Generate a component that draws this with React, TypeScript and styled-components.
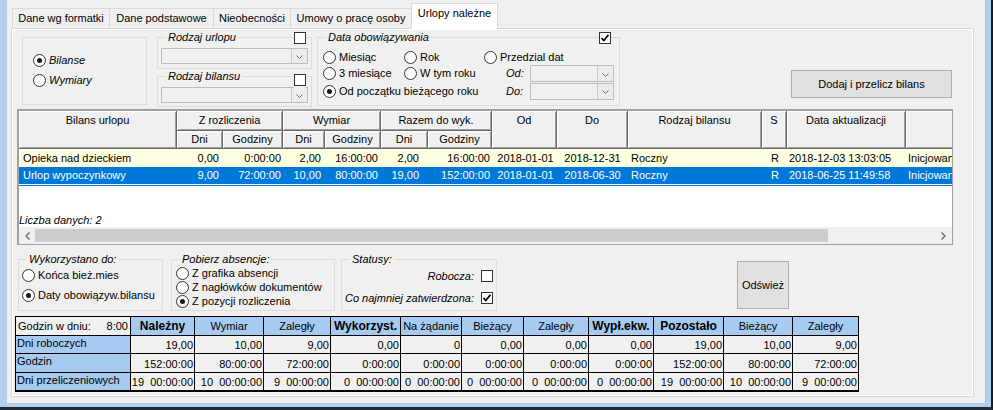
import React from "react";
import styled, { createGlobalStyle } from "styled-components";

const GlobalStyle = createGlobalStyle`
  html, body { margin: 0; padding: 0; background: #f0f0f0; }
  body { font-family: "Liberation Sans", Arial, sans-serif; font-size: 11px; line-height: 13px; color: #000; }
  * { box-sizing: border-box; }
`;

const Window = styled.div`
  width: 993px;
  height: 410px;
  border-right: 2px solid #1c1c1c;
  border-bottom: 3px solid #1d2b36;
  overflow: hidden;
`;

const Frame = styled.div`
  height: 100%;
  border-left: 7px solid #b4cfed;
  border-right: 6px solid #b4cfed;
  border-bottom: 4px solid #b4cfed;
  background: #f0f0f0;
  padding-left: 4px;
`;

const TabStrip = styled.div`
  height: 28px;
  display: flex;
  align-items: flex-end;
  padding-left: 1px;
`;

const Tab = styled.div<{ $w: number; $active?: boolean }>`
  width: ${(p) => p.$w}px;
  height: ${(p) => (p.$active ? 26 : 20)}px;
  margin-right: -1px;
  margin-bottom: ${(p) => (p.$active ? -1 : 0)}px;
  position: relative;
  z-index: ${(p) => (p.$active ? 2 : 1)};
  border: 1px solid #d9d9d9;
  border-bottom: none;
  background: ${(p) => (p.$active ? "#ffffff" : "#f0f0f0")};
  display: flex;
  justify-content: center;
  align-items: center;
  padding-bottom: ${(p) => (p.$active ? 6 : 1)}px;
  white-space: nowrap;
`;

const Panel = styled.div`
  width: 963px;
  height: 369px;
  border: 1px solid #d9d9d9;
  box-shadow: inset 1px 1px 0 #fff, inset -1px -1px 0 #fff;
  display: flex;
  flex-direction: column;
`;

const TopRow = styled.div`
  height: 78px;
  display: flex;
  align-items: flex-start;
`;

const ModeBox = styled.div`
  margin: 8px 0 0 10px;
  width: 125px;
  height: 68px;
  border: 1px solid #dcdcdc;
  padding: 16px 0 0 10px;
  display: flex;
  flex-direction: column;
  gap: 7px;
`;

const ComboColumn = styled.div`
  margin-left: 10px;
  width: 155px;
  display: flex;
  flex-direction: column;
`;

const GroupWrap = styled.div<{ $mt: number; $ml?: number; $w?: number }>`
  position: relative;
  margin-top: ${(p) => p.$mt}px;
  margin-left: ${(p) => p.$ml ?? 0}px;
  width: ${(p) => (p.$w ? `${p.$w}px` : "auto")};
`;

const Fieldset = styled.fieldset<{ $h: number }>`
  margin: 0;
  padding: 0;
  min-width: 0;
  height: ${(p) => p.$h}px;
  border: 1px solid #dcdcdc;
`;

const Legend = styled.legend`
  margin-left: 8px;
  padding: 0 2px;
  font-style: italic;
  line-height: 13px;
  font-size: 11px;
`;

const CornerCheck = styled.div<{ $top: number; $right: number }>`
  position: absolute;
  top: ${(p) => p.$top}px;
  right: ${(p) => p.$right}px;
  background: #f0f0f0;
`;

const ComboBody = styled.div`
  padding: 4px 3px 0 3px;
`;

const ComboBox = styled.div<{ $w?: number; $h?: number }>`
  width: ${(p) => (p.$w ? `${p.$w}px` : "100%")};
  height: ${(p) => p.$h ?? 16}px;
  border: 1px solid #bcbcbc;
  background: #f0f0f0;
  display: flex;
  justify-content: flex-end;
`;

const ComboButton = styled.div`
  width: 16px;
  height: 100%;
  border-left: 1px solid #c8c8c8;
  background: #ececec;
  display: flex;
  align-items: center;
  justify-content: center;
  padding-top: 2px;
`;

const DateBody = styled.div`
  padding: 5px 0 0 5px;
  display: grid;
  grid-template-columns: 81px 80px 1fr;
  grid-template-rows: 16px 17px 18px;
  align-items: center;
`;

const FieldRow = styled.div`
  display: flex;
  align-items: center;
  padding-left: 22px;
`;

const FieldLabel = styled.span`
  width: 24px;
  font-style: italic;
`;

const ActionButton = styled.div<{ $ml: number; $mt: number; $w: number; $h: number }>`
  margin-left: ${(p) => p.$ml}px;
  margin-top: ${(p) => p.$mt}px;
  width: ${(p) => p.$w}px;
  height: ${(p) => p.$h}px;
  background: #e1e1e1;
  border: 1px solid #adadad;
  display: flex;
  align-items: center;
  justify-content: center;
  white-space: nowrap;
`;

const RadioOption = styled.label<{ $italic?: boolean }>`
  display: flex;
  align-items: center;
  gap: 3px;
  height: 13px;
  white-space: nowrap;
  font-style: ${(p) => (p.$italic ? "italic" : "normal")};
`;

const RadioCircle = styled.span<{ $on?: boolean }>`
  flex: none;
  width: 13px;
  height: 13px;
  border-radius: 50%;
  border: 1px solid #333;
  background: #fff;
  display: inline-flex;
  align-items: center;
  justify-content: center;
  &::after {
    content: "";
    width: 5px;
    height: 5px;
    border-radius: 50%;
    background: ${(p) => (p.$on ? "#1a1a1a" : "transparent")};
  }
`;

const CheckBox = styled.span`
  flex: none;
  width: 12px;
  height: 12px;
  border: 1px solid #333;
  background: #fff;
  display: inline-flex;
  align-items: center;
  justify-content: center;
`;

/* ---------- Grid ---------- */

const COLS = "158px 46px 60px 42px 56px 47px 64px 65px 71px 134px 25px 119px 110px";

const GridFrame = styled.div`
  margin: 2px 0 0 5px;
  width: 936px;
  height: 136px;
  border: 1px solid #a0a0a0;
  border-top-width: 2px;
  border-left-width: 2px;
  background: #fff;
  display: flex;
  flex-direction: column;
  overflow: hidden;
`;

const GridHeader = styled.div`
  display: grid;
  grid-template-columns: ${COLS};
  grid-template-rows: 20px 18px;
  flex: none;
`;

const HeadCell = styled.div<{ $col: string; $row: string; $top?: boolean }>`
  grid-column: ${(p) => p.$col};
  grid-row: ${(p) => p.$row};
  background: #f0f0f0;
  border-right: 1px solid #696969;
  border-bottom: 1px solid #696969;
  box-shadow: inset 1px 1px 0 #fff, inset -1px -1px 0 #a0a0a0;
  display: flex;
  justify-content: center;
  align-items: ${(p) => (p.$top ? "flex-start" : "center")};
  padding-top: ${(p) => (p.$top ? 3 : 0)}px;
  white-space: nowrap;
`;

const RowsArea = styled.div`
  flex: 1;
  display: flex;
  flex-direction: column;
  padding-top: 1px;
`;

const DataRow = styled.div<{ $selected?: boolean }>`
  display: grid;
  grid-template-columns: ${COLS};
  height: 17px;
  background: ${(p) => (p.$selected ? "#0078d7" : "#ffffe1")};
  color: ${(p) => (p.$selected ? "#fff" : "#000")};
  box-shadow: ${(p) => (p.$selected ? "0 1px 0 #fff, 0 2px 0 #0078d7" : "none")};
`;

const DataCell = styled.div<{ $align?: string; $pl?: number; $pr?: number }>`
  display: flex;
  align-items: center;
  justify-content: ${(p) => p.$align ?? "flex-start"};
  padding-left: ${(p) => p.$pl ?? 0}px;
  padding-right: ${(p) => p.$pr ?? 0}px;
  white-space: nowrap;
  overflow: hidden;
`;

const CountLabel = styled.div`
  margin-top: auto;
  height: 13px;
  font-style: italic;
`;

const ScrollBar = styled.div`
  flex: none;
  height: 17px;
  background: #f0f0f0;
  display: flex;
  align-items: center;
`;

const ScrollArrow = styled.div<{ $w: number }>`
  width: ${(p) => p.$w}px;
  height: 100%;
  display: flex;
  align-items: center;
  justify-content: center;
`;

const ScrollThumb = styled.div`
  width: 793px;
  height: 13px;
  background: #cdcdcd;
`;

const ScrollTrack = styled.div`
  flex: 1;
`;

/* ---------- Bottom ---------- */

const BottomRow = styled.div`
  height: 58px;
  margin-top: 8px;
  display: flex;
  align-items: flex-start;
`;

const OptionList = styled.div<{ $pt: number; $pl: number; $gap: number; $rowH: number }>`
  padding: ${(p) => p.$pt}px 0 0 ${(p) => p.$pl}px;
  display: flex;
  flex-direction: column;
  gap: ${(p) => p.$gap}px;
  & > * { height: ${(p) => p.$rowH}px; }
`;

const StatusList = styled.div`
  padding: 3px 3px 0 0;
  display: flex;
  flex-direction: column;
  gap: 8px;
`;

const StatusRow = styled.div`
  height: 14px;
  display: flex;
  align-items: center;
  justify-content: flex-end;
  gap: 7px;
  font-style: italic;
  white-space: nowrap;
`;

const SUM_COLS = "115px 64px 69px 67px 70px 61px 62px 65px 65px 70px 69px 66px";

const SummaryTable = styled.div`
  margin: 5px 0 0 3px;
  width: 844px;
  display: grid;
  grid-template-columns: ${SUM_COLS};
  grid-template-rows: 19px 18px 19px 18px;
  border-left: 1px solid #000;
  border-top: 1px solid #000;
  border-right: 1px solid #000;
  border-bottom: 1px solid #000;
`;

const SumCell = styled.div<{ $kind: "corner" | "head" | "label" | "value"; $bold?: boolean }>`
  border-right: 1px solid #000;
  border-bottom: 1px solid #000;
  background: ${(p) => (p.$kind === "head" || p.$kind === "label" ? "#a6caf0" : "#f0f0f0")};
  font-weight: ${(p) => (p.$bold ? 700 : 400)};
  font-size: ${(p) => (p.$bold ? "12px" : "11px")};
  display: flex;
  white-space: pre;
  overflow: hidden;
  justify-content: ${(p) =>
    p.$kind === "head" ? "center" : p.$kind === "value" ? "flex-end" : p.$kind === "corner" ? "space-between" : "flex-start"};
  align-items: ${(p) => (p.$kind === "label" ? "flex-start" : p.$kind === "value" ? "flex-end" : "center")};
  padding: ${(p) =>
    p.$kind === "label" ? "1px 0 0 1px" : p.$kind === "value" ? "0 1px 1px 0" : p.$kind === "corner" ? "0 2px 0 2px" : "0"};
`;

/* ---------- small drawings ---------- */

const Chevron = () => (
  <svg width="7" height="4" viewBox="0 0 7 4">
    <polyline points="0.5,0.5 3.5,3.5 6.5,0.5" fill="none" stroke="#707070" strokeWidth="1" />
  </svg>
);

const Tick = () => (
  <svg width="10" height="10" viewBox="0 0 10 10">
    <polyline points="1.5,5 3.8,7.5 8.5,1.8" fill="none" stroke="#000" strokeWidth="1.8" />
  </svg>
);

const ArrowGlyph = ({ dir }: { dir: "l" | "r" }) => (
  <svg width="5" height="8" viewBox="0 0 5 8">
    <polyline
      points={dir === "l" ? "4.5,0.5 1,4 4.5,7.5" : "0.5,0.5 4,4 0.5,7.5"}
      fill="none"
      stroke="#606060"
      strokeWidth="1.2"
    />
  </svg>
);

const Radio = ({ on, label, italic }: { on?: boolean; label: string; italic?: boolean }) => (
  <RadioOption $italic={italic}>
    <RadioCircle $on={on} />
    {label}
  </RadioOption>
);

const Check = ({ on }: { on?: boolean }) => <CheckBox>{on ? <Tick /> : null}</CheckBox>;

const Combo = ({ w, h }: { w?: number; h?: number }) => (
  <ComboBox $w={w} $h={h}>
    <ComboButton>
      <Chevron />
    </ComboButton>
  </ComboBox>
);

/* ---------- data ---------- */

const tabs = [
  { t: "Dane wg formatki", w: 98 },
  { t: "Dane podstawowe", w: 105 },
  { t: "Nieobecności", w: 78 },
  { t: "Umowy o pracę osoby", w: 122 },
  { t: "Urlopy należne", w: 87, active: true },
];

type Row = string[];
const rows: { cells: Row; selected?: boolean }[] = [
  {
    cells: ["Opieka nad dzieckiem", "0,00", "0:00:00", "2,00", "16:00:00", "2,00", "16:00:00", "2018-01-01", "2018-12-31", "Roczny", "R", "2018-12-03 13:03:05", "Inicjowany"],
  },
  {
    cells: ["Urlop wypoczynkowy", "9,00", "72:00:00", "10,00", "80:00:00", "19,00", "152:00:00", "2018-01-01", "2018-06-30", "Roczny", "R", "2018-06-25 11:49:58", "Inicjowany"],
    selected: true,
  },
];

const cellFmt: { align: string; pl?: number; pr?: number }[] = [
  { align: "flex-start", pl: 4 },
  { align: "flex-end", pr: 4 },
  { align: "flex-end", pr: 2 },
  { align: "flex-end", pr: 4 },
  { align: "flex-end", pr: 3 },
  { align: "flex-end", pr: 9 },
  { align: "flex-end", pr: 2 },
  { align: "center", pl: 2 },
  { align: "center" },
  { align: "flex-start", pl: 3 },
  { align: "center", pl: 1 },
  { align: "flex-start", pl: 2 },
  { align: "flex-start", pl: 2 },
];

const sumHead = [
  { t: "Należny", b: true },
  { t: "Wymiar" },
  { t: "Zaległy" },
  { t: "Wykorzyst.", b: true },
  { t: "Na żądanie" },
  { t: "Bieżący" },
  { t: "Zaległy" },
  { t: "Wypł.ekw.", b: true },
  { t: "Pozostało", b: true },
  { t: "Bieżący" },
  { t: "Zaległy" },
];

const sumRows: { label: string; values: string[] }[] = [
  { label: "Dni roboczych", values: ["19,00", "10,00", "9,00", "0,00", "0", "0,00", "0,00", "0,00", "19,00", "10,00", "9,00"] },
  {
    label: "Godzin",
    values: ["152:00:00", "80:00:00", "72:00:00", "0:00:00", "0:00:00", "0:00:00", "0:00:00", "0:00:00", "152:00:00", "80:00:00", "72:00:00"],
  },
  {
    label: "Dni przeliczeniowych",
    values: [
      "19  00:00:00",
      "10  00:00:00",
      "9  00:00:00",
      "0  00:00:00",
      "0  00:00:00",
      "0  00:00:00",
      "0  00:00:00",
      "0  00:00:00",
      "19  00:00:00",
      "10  00:00:00",
      "9  00:00:00",
    ],
  },
];

export default function App() {
  return (
    <>
      <GlobalStyle />
      <Window>
        <Frame>
          <TabStrip>
            {tabs.map((t) => (
              <Tab key={t.t} $w={t.w} $active={t.active}>
                {t.t}
              </Tab>
            ))}
          </TabStrip>
          <Panel>
            <TopRow>
              <ModeBox>
                <Radio on label="Bilanse" italic />
                <Radio label="Wymiary" italic />
              </ModeBox>
              <ComboColumn>
                <GroupWrap $mt={2}>
                  <Fieldset $h={38}>
                    <Legend>Rodzaj urlopu</Legend>
                    <ComboBody>
                      <Combo />
                    </ComboBody>
                  </Fieldset>
                  <CornerCheck $top={1} $right={6}>
                    <Check />
                  </CornerCheck>
                </GroupWrap>
                <GroupWrap $mt={1}>
                  <Fieldset $h={37}>
                    <Legend>Rodzaj bilansu</Legend>
                    <ComboBody>
                      <Combo />
                    </ComboBody>
                  </Fieldset>
                  <CornerCheck $top={4} $right={6}>
                    <Check />
                  </CornerCheck>
                </GroupWrap>
              </ComboColumn>
              <GroupWrap $mt={2} $ml={5} $w={303}>
                <Fieldset $h={75}>
                  <Legend>Data obowiązywania</Legend>
                  <DateBody>
                    <Radio label="Miesiąc" />
                    <Radio label="Rok" />
                    <Radio label="Przedzial dat" />
                    <Radio label="3 miesiące" />
                    <Radio label="W tym roku" />
                    <FieldRow>
                      <FieldLabel>Od:</FieldLabel>
                      <Combo w={84} h={17} />
                    </FieldRow>
                    <div style={{ gridColumn: "1 / span 2" }}>
                      <Radio on label="Od początku bieżącego roku" />
                    </div>
                    <FieldRow>
                      <FieldLabel>Do:</FieldLabel>
                      <Combo w={84} h={17} />
                    </FieldRow>
                  </DateBody>
                </Fieldset>
                <CornerCheck $top={1} $right={9}>
                  <Check on />
                </CornerCheck>
              </GroupWrap>
              <ActionButton $ml={171} $mt={41} $w={161} $h={28}>
                Dodaj i przelicz bilans
              </ActionButton>
            </TopRow>

            <GridFrame>
              <GridHeader>
                <HeadCell $col="1" $row="1 / span 2" $top>Bilans urlopu</HeadCell>
                <HeadCell $col="2 / span 2" $row="1">Z rozliczenia</HeadCell>
                <HeadCell $col="4 / span 2" $row="1">Wymiar</HeadCell>
                <HeadCell $col="6 / span 2" $row="1">Razem do wyk.</HeadCell>
                <HeadCell $col="8" $row="1 / span 2" $top>Od</HeadCell>
                <HeadCell $col="9" $row="1 / span 2" $top>Do</HeadCell>
                <HeadCell $col="10" $row="1 / span 2" $top>Rodzaj bilansu</HeadCell>
                <HeadCell $col="11" $row="1 / span 2" $top>S</HeadCell>
                <HeadCell $col="12" $row="1 / span 2" $top>Data aktualizacji</HeadCell>
                <HeadCell $col="13" $row="1 / span 2" $top></HeadCell>
                <HeadCell $col="2" $row="2">Dni</HeadCell>
                <HeadCell $col="3" $row="2">Godziny</HeadCell>
                <HeadCell $col="4" $row="2">Dni</HeadCell>
                <HeadCell $col="5" $row="2">Godziny</HeadCell>
                <HeadCell $col="6" $row="2">Dni</HeadCell>
                <HeadCell $col="7" $row="2">Godziny</HeadCell>
              </GridHeader>
              <RowsArea>
                {rows.map((r, i) => (
                  <DataRow key={i} $selected={r.selected}>
                    {r.cells.map((c, j) => (
                      <DataCell key={j} $align={cellFmt[j].align} $pl={cellFmt[j].pl} $pr={cellFmt[j].pr}>
                        {c}
                      </DataCell>
                    ))}
                  </DataRow>
                ))}
                <CountLabel>Liczba danych: 2</CountLabel>
              </RowsArea>
              <ScrollBar>
                <ScrollArrow $w={16}>
                  <ArrowGlyph dir="l" />
                </ScrollArrow>
                <ScrollThumb />
                <ScrollTrack />
                <ScrollArrow $w={17}>
                  <ArrowGlyph dir="r" />
                </ScrollArrow>
              </ScrollBar>
            </GridFrame>

            <BottomRow>
              <GroupWrap $mt={0} $ml={6} $w={145}>
                <Fieldset $h={58}>
                  <Legend>Wykorzystano do:</Legend>
                  <OptionList $pt={3} $pl={3} $gap={7} $rowH={13}>
                    <Radio label="Końca bież.mies" />
                    <Radio on label="Daty obowiązyw.bilansu" />
                  </OptionList>
                </Fieldset>
              </GroupWrap>
              <GroupWrap $mt={0} $ml={8} $w={164}>
                <Fieldset $h={58}>
                  <Legend>Pobierz absencje:</Legend>
                  <OptionList $pt={0} $pl={4} $gap={0} $rowH={14}>
                    <Radio label="Z grafika absencji" />
                    <Radio label="Z nagłówków dokumentów" />
                    <Radio on label="Z pozycji rozliczenia" />
                  </OptionList>
                </Fieldset>
              </GroupWrap>
              <GroupWrap $mt={0} $ml={6} $w={156}>
                <Fieldset $h={58}>
                  <Legend>Statusy:</Legend>
                  <StatusList>
                    <StatusRow>
                      Robocza:
                      <Check />
                    </StatusRow>
                    <StatusRow>
                      Co najmniej zatwierdzona:
                      <Check on />
                    </StatusRow>
                  </StatusList>
                </Fieldset>
              </GroupWrap>
              <ActionButton $ml={240} $mt={8} $w={52} $h={48}>
                Odśwież
              </ActionButton>
            </BottomRow>

            <SummaryTable>
              <SumCell $kind="corner">
                <span>Godzin w dniu:</span>
                <span>8:00</span>
              </SumCell>
              {sumHead.map((h, i) => (
                <SumCell key={i} $kind="head" $bold={h.b}>
                  {h.t}
                </SumCell>
              ))}
              {sumRows.map((r) => (
                <React.Fragment key={r.label}>
                  <SumCell $kind="label">{r.label}</SumCell>
                  {r.values.map((v, i) => (
                    <SumCell key={i} $kind="value">
                      {v}
                    </SumCell>
                  ))}
                </React.Fragment>
              ))}
            </SummaryTable>
          </Panel>
        </Frame>
      </Window>
    </>
  );
}
